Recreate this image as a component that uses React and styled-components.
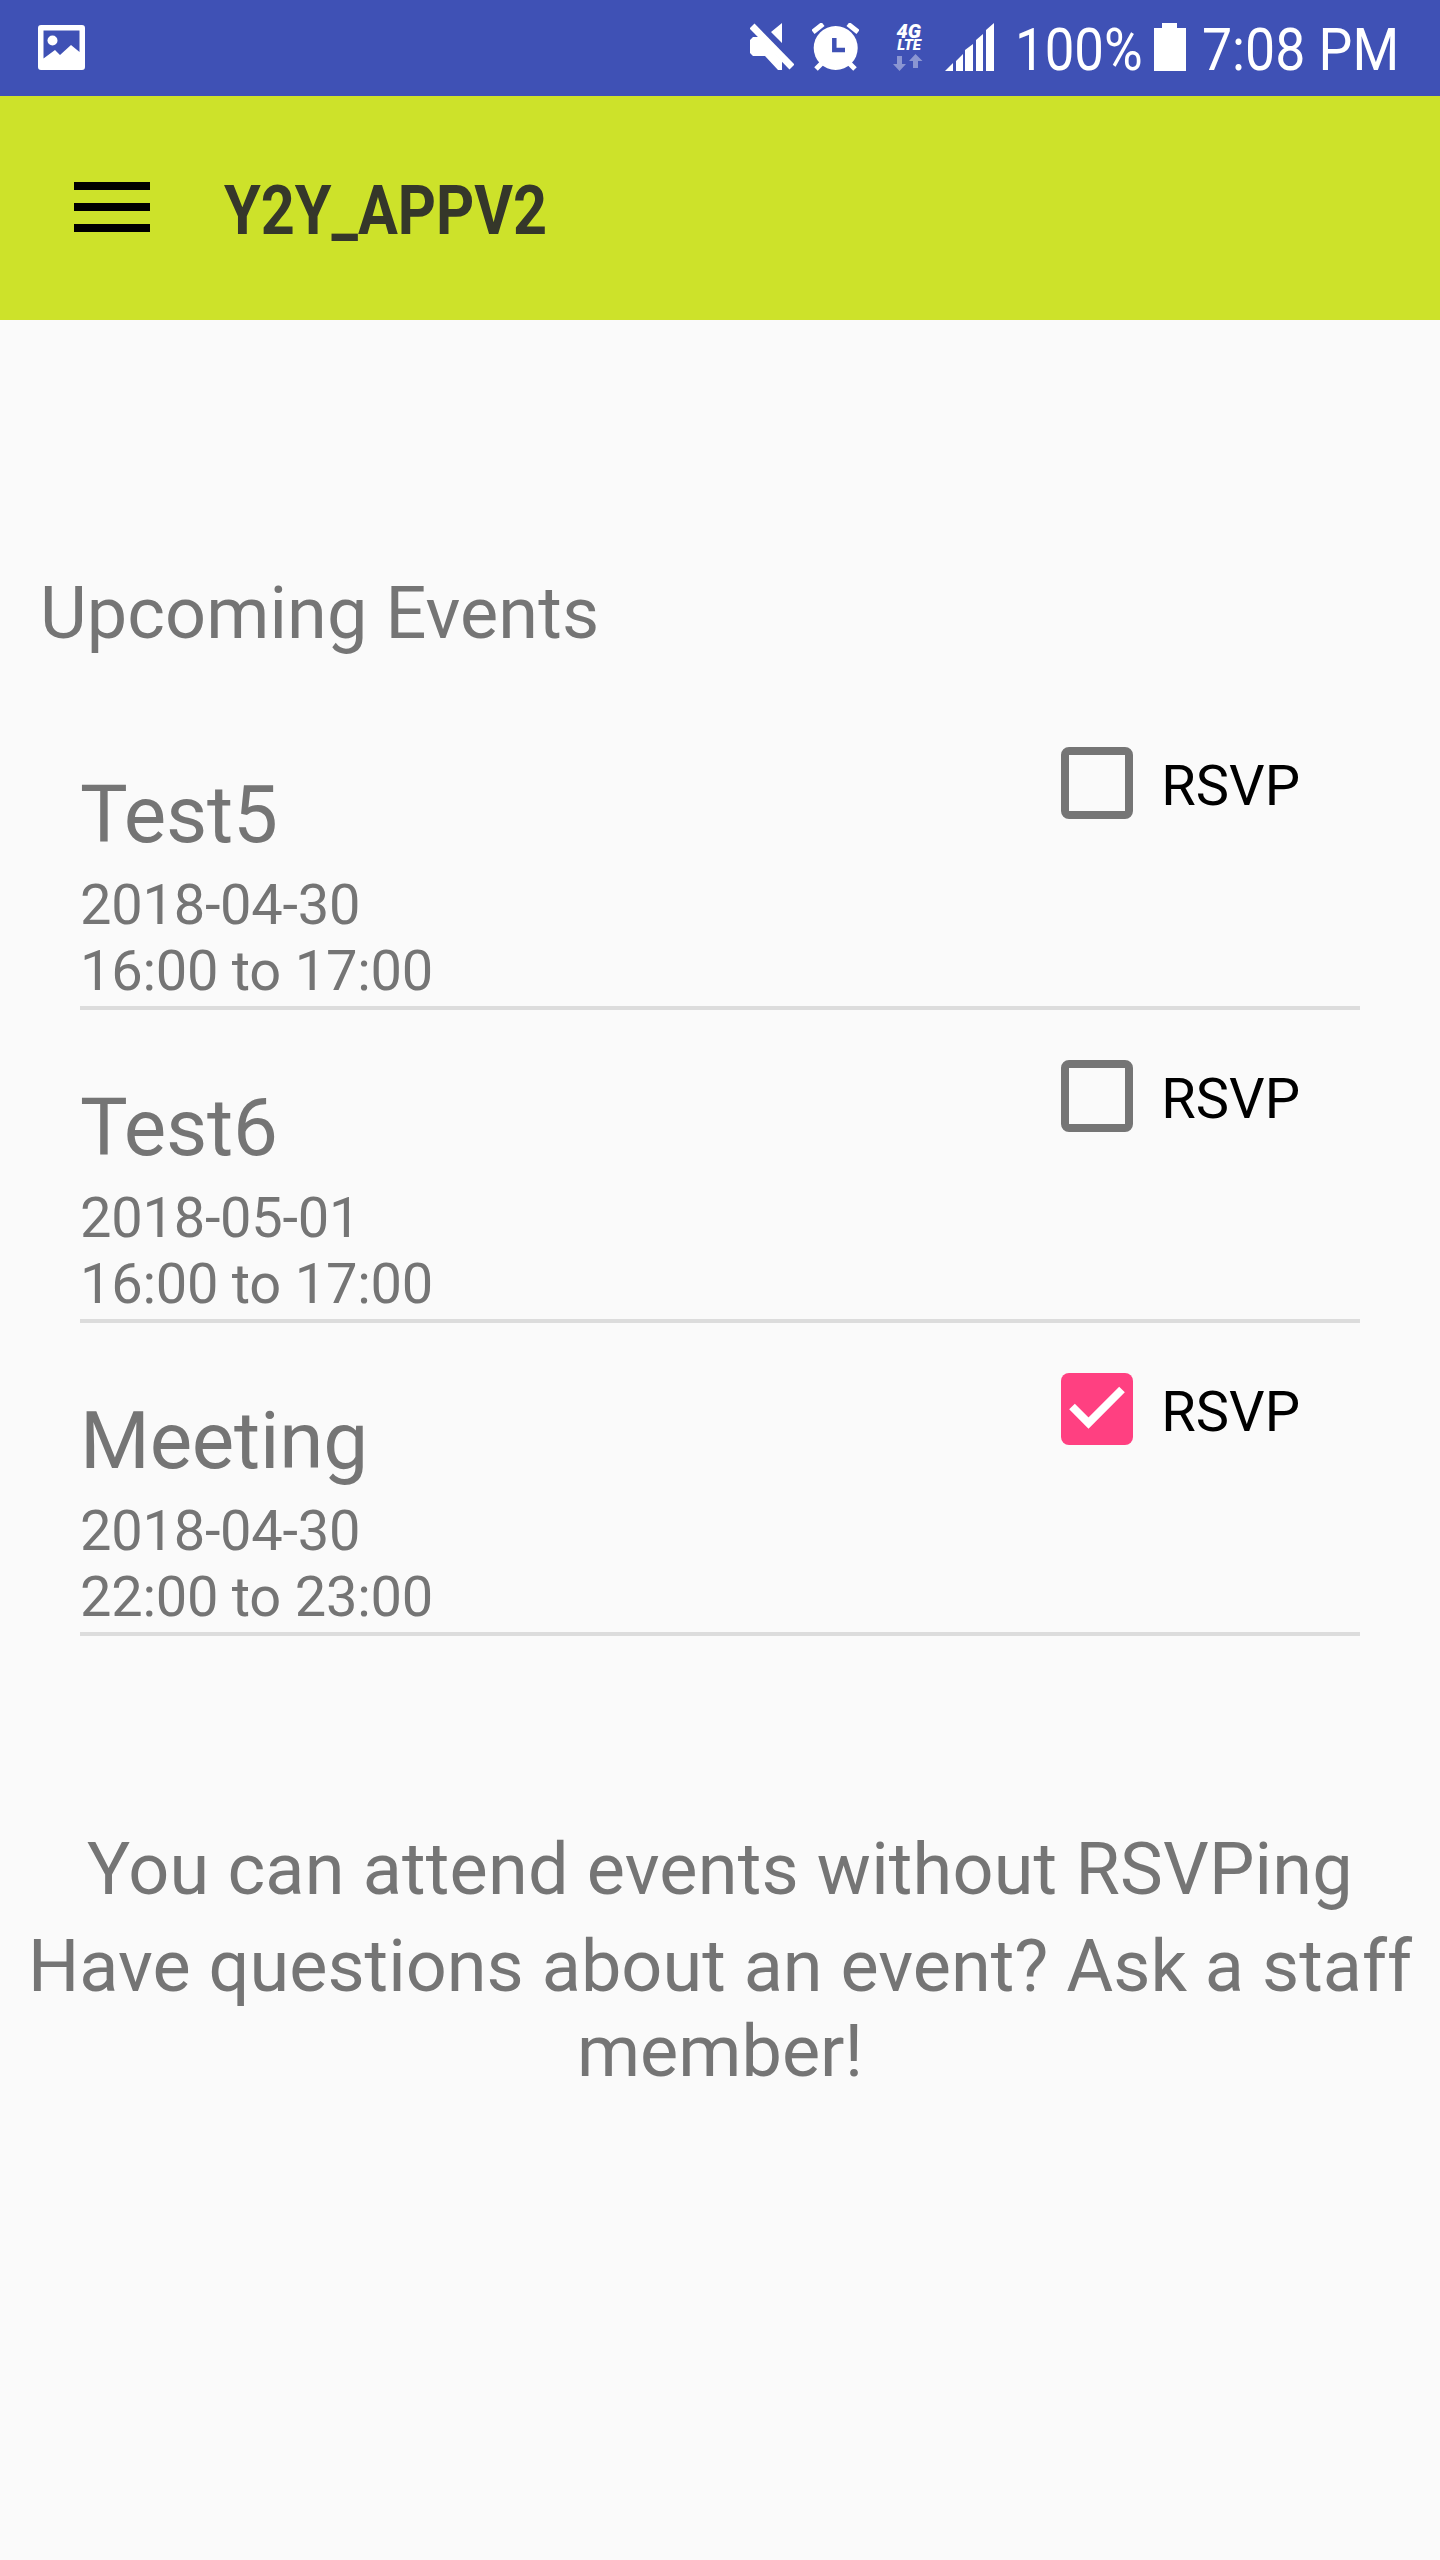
import React from "react";
import styled, { createGlobalStyle } from "styled-components";

const Global = createGlobalStyle`
  html, body { margin: 0; padding: 0; background: #fafafa; }
  body { font-family: Roboto, "Liberation Sans", sans-serif; }
`;

const Screen = styled.div`
  width: 1440px;
  height: 2560px;
  background: #fafafa;
  overflow: hidden;
`;

const StatusBar = styled.div`
  height: 96px;
  background: #3f51b5;
  display: flex;
  align-items: center;
  justify-content: space-between;
  padding: 0 42px 2px 38px;
  box-sizing: border-box;
  color: #fff;
`;
const StatusRight = styled.div`
  display: flex;
  align-items: center;
`;
const StatusIcon = styled.svg`
  display: block;
  flex: none;
  margin-left: ${p => p.$ml || 0}px;
`;
const StatusText = styled.span`
  display: inline-block;
  width: ${p => p.$w}px;
  padding-top: 6px;
  font-size: 59px;
  line-height: 68px;
  white-space: nowrap;
  transform: scaleX(${p => p.$sx});
  transform-origin: left center;
  margin-left: ${p => p.$ml || 0}px;
`;
const NetBadge = styled.div`
  width: 30px;
  height: 48px;
  margin: 0 22px 0 34px;
  display: flex;
  flex-direction: column;
`;
const NetLabel = styled.div`
  width: 28px;
  height: 31px;
  padding-top: 1px;
  box-sizing: border-box;
  font-size: 15px;
  line-height: 13px;
  font-weight: 900;
  font-style: italic;
  text-align: right;
  &::first-line {
    font-size: 20px;
    line-height: 15px;
  }
`;

const AppBar = styled.div`
  height: 224px;
  background: #cde22a;
  display: flex;
  align-items: center;
  padding-left: 74px;
`;
const MenuSvg = styled.svg`
  display: block;
  margin-bottom: 2px;
`;
const Title = styled.div`
  margin-left: 74px;
  padding-top: 5px;
  font-size: 69px;
  line-height: 81px;
  font-weight: 700;
  color: #35372a;
  white-space: nowrap;
  transform: scaleX(0.86);
  transform-origin: left center;
`;

const Heading = styled.div`
  padding: 252px 0 0 40px;
  margin-bottom: 41px;
  font-size: 72px;
  line-height: 84px;
  letter-spacing: 0.1px;
  color: #757575;
`;

const EventList = styled.div`
  padding: 0 80px;
`;
const Row = styled.div`
  height: 313px;
  box-sizing: border-box;
  border-bottom: 4px solid #dcdcdc;
  display: flex;
  justify-content: space-between;
  align-items: flex-start;
`;
const EventInfo = styled.div`
  padding-top: 71px;
`;
const EventName = styled.div`
  font-size: 80px;
  line-height: 94px;
  letter-spacing: -0.2px;
  color: #757575;
  margin-bottom: 10px;
`;
const EventLine = styled.div`
  font-size: 56px;
  line-height: 66px;
  letter-spacing: -0.25px;
  color: #757575;
`;
const Rsvp = styled.label`
  display: flex;
  align-items: center;
  gap: 28px;
  margin-top: 50px;
  padding-right: 60px;
  font-size: 56px;
  line-height: 66px;
  color: #000;
`;
const RsvpText = styled.span`
  padding-top: 6px;
`;
const Box = styled.span`
  width: 72px;
  height: 72px;
  box-sizing: border-box;
  border-radius: 8px;
  display: flex;
  border: ${p => (p.$checked ? "none" : "8px solid #757575")};
  background: ${p => (p.$checked ? "#ff4081" : "transparent")};
`;

const Footer = styled.div`
  margin-top: 192px;
  padding: 0 20px;
  text-align: center;
  color: #757575;
  font-size: 72px;
`;
const Attend = styled.div`
  line-height: 84px;
  letter-spacing: 0.2px;
  margin-bottom: 12px;
`;
const Questions = styled.div`
  line-height: 85px;
  letter-spacing: 0.03px;
`;

const PictureIcon = () => (
  <StatusIcon width="47" height="45" viewBox="0 0 47 45">
    <path fill="#fff" fillRule="evenodd" d="M3 0h41a3 3 0 0 1 3 3v39a3 3 0 0 1-3 3H3a3 3 0 0 1-3-3V3a3 3 0 0 1 3-3zM5.500 5.500v28L17 25l5 5 11-10 8.500 7V5.500z" />
    <circle cx="14.5" cy="15.5" r="5" fill="#fff" />
  </StatusIcon>
);

const MuteIcon = () => (
  <StatusIcon width="44" height="48" viewBox="0 0 44 48">
    <path fill="#fff" d="M32 0v20L21 9zM0 17l3-3h7l22 24v9h-4L15 33H3l-3-3z" />
    <path stroke="#fff" strokeWidth="7" d="M2 3l40 41" />
  </StatusIcon>
);

const AlarmIcon = () => (
  <StatusIcon $ml={18} width="47" height="48" viewBox="0 0 47 48">
    <circle cx="23.7" cy="25" r="22" fill="#fff" />
    <path stroke="#fff" strokeWidth="5" fill="none" d="M1 9l10-8M36 1l10 8M4 46l6-6M37 40l6 6" />
    <path stroke="#3f51b5" strokeWidth="4.5" fill="none" d="M22.3 15v12H33" />
  </StatusIcon>
);

const SignalIcon = () => (
  <StatusIcon width="49" height="48" viewBox="0 0 49 48">
    <path fill="#fff" d="M0 48l8-8v8zM11 38l7-7v17h-7zM20 27l8-6v27h-8zM31 17l7-6v37h-7zM41 7l8-7v48h-8z" />
  </StatusIcon>
);

const BatteryIcon = () => (
  <StatusIcon width="32" height="48" viewBox="0 0 32 48">
    <path fill="#fff" d="M8 0h15v5h9v43H0V5h8z" />
  </StatusIcon>
);

const DataArrows = () => (
  <svg width="30" height="17" viewBox="0 0 30 17">
    <path fill="#fff" opacity="0.4" d="M4 2h5v8h4l-6.500 7L0 10h4z" />
    <path fill="#fff" opacity="0.4" d="M20 14h5V7h4.500L22.500 0 16 7h4z" />
  </svg>
);

const MenuIcon = () => (
  <MenuSvg width="76" height="50" viewBox="0 0 76 50">
    <path d="M0 0h76v8H0zM0 21h76v8H0zM0 42h76v8H0z" />
  </MenuSvg>
);

const CheckMark = () => (
  <svg width="72" height="72" viewBox="0 0 72 72">
    <path fill="none" stroke="#fff" strokeWidth="8" d="M11 33.500L27.500 50 61 16.500" />
  </svg>
);

const events = [
  { name: "Test5", date: "2018-04-30", time: "16:00 to 17:00", rsvp: false },
  { name: "Test6", date: "2018-05-01", time: "16:00 to 17:00", rsvp: false },
  { name: "Meeting", date: "2018-04-30", time: "22:00 to 23:00", rsvp: true },
];

const App = () => (
  <Screen>
    <Global />
    <StatusBar>
      <PictureIcon />
      <StatusRight>
        <MuteIcon />
        <AlarmIcon />
        <NetBadge>
          <NetLabel>4G<br />LTE</NetLabel>
          <DataArrows />
        </NetBadge>
        <SignalIcon />
        <StatusText $w={139} $sx={0.895} $ml={21}>100%</StatusText>
        <BatteryIcon />
        <StatusText $w={196} $sx={0.908} $ml={16}>7:08 PM</StatusText>
      </StatusRight>
    </StatusBar>
    <AppBar>
      <MenuIcon />
      <Title>Y2Y_APPV2</Title>
    </AppBar>
    <Heading>Upcoming Events</Heading>
    <EventList>
      {events.map((e) => (
        <Row key={e.name}>
          <EventInfo>
            <EventName>{e.name}</EventName>
            <EventLine>{e.date}</EventLine>
            <EventLine>{e.time}</EventLine>
          </EventInfo>
          <Rsvp>
            <Box $checked={e.rsvp}>{e.rsvp && <CheckMark />}</Box>
            <RsvpText>RSVP</RsvpText>
          </Rsvp>
        </Row>
      ))}
    </EventList>
    <Footer>
      <Attend>You can attend events without RSVPing</Attend>
      <Questions>Have questions about an event? Ask a staff member!</Questions>
    </Footer>
  </Screen>
);

export default App;
